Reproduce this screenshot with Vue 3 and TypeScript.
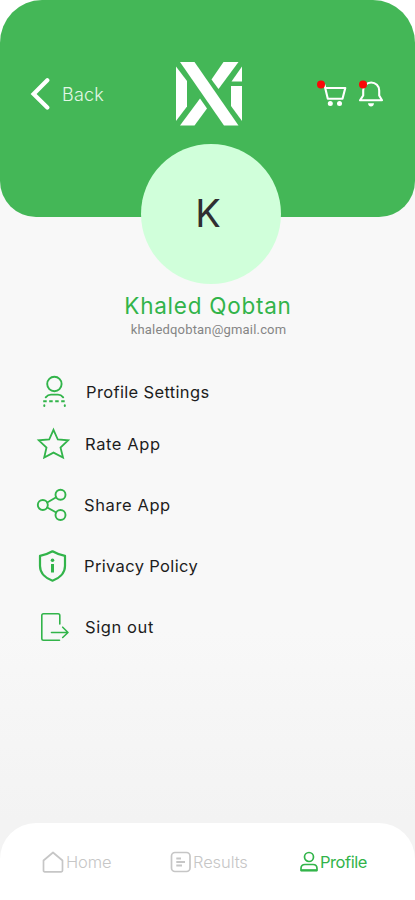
<script setup lang="ts">
interface MenuItem {
  id: string
  label: string
}

const menu: MenuItem[] = [
  { id: 'settings', label: 'Profile Settings' },
  { id: 'rate', label: 'Rate App' },
  { id: 'share', label: 'Share App' },
  { id: 'privacy', label: 'Privacy Policy' },
  { id: 'signout', label: 'Sign out' },
]
</script>

<template>
  <div class="screen">
    <header class="header">
      <button class="back" type="button">
        <svg class="chevron" viewBox="0 0 20 34" fill="none" stroke="#fff" stroke-width="4.2" stroke-linecap="round" stroke-linejoin="miter">
          <path d="M17.300 3.2 3.6 17 17.300 30.500" />
        </svg>
        <span class="back-label">Back</span>
      </button>
      <svg class="logo" viewBox="0 0 66 64" fill="#fff">
        <path d="M4 0H18.500L62.500 63.500H48Z" />
        <path d="M47.500 0H62.500L42.500 27 35.500 17.500Z" />
        <path d="M24 36.500 31 46.500 18.500 63.500H4Z" />
        <path d="M0 4.500 11 19V44.500L0 59Z" />
        <path d="M66 4.500V19.500H55.500Z" />
        <path d="M55 24H66V59L55 44Z" />
      </svg>
      <div class="actions">
        <svg class="cart" viewBox="0 0 30 28" fill="none">
          <path d="M4 5H7.500L10.800 18.800H25.500L28.300 8H8.300" stroke="#fff" stroke-width="2.100" stroke-linejoin="round" />
          <circle cx="13.300" cy="23.500" r="2.500" fill="#fff" />
          <circle cx="22.500" cy="23.500" r="2.500" fill="#fff" />
          <circle cx="4" cy="4.500" r="4" fill="#f90808" />
        </svg>
        <svg class="bell" viewBox="0 0 26 28" fill="none">
          <path d="M2 20.300H24L21.200 15.500V10.500A8 8 0 0 0 5.200 10.500V15.500Z" stroke="#fff" stroke-width="2.100" stroke-linejoin="round" />
          <path d="M10 23.200H16Q15.500 26.500 13 26.500T10 23.200Z" fill="#fff" />
          <circle cx="5" cy="4.500" r="4" fill="#f90808" />
        </svg>
      </div>
    </header>

    <main class="content">
      <div class="avatar"><span>K</span></div>
      <h1 class="name">Khaled Qobtan</h1>
      <p class="email">khaledqobtan@gmail.com</p>

      <ul class="menu">
        <li v-for="item in menu" :key="item.id" class="item" :class="item.id">
          <svg class="icon" viewBox="0 0 34 34" fill="none" stroke="#32b44a" stroke-width="1.900" stroke-linecap="round" stroke-linejoin="round">
            <template v-if="item.id === 'settings'">
              <circle cx="18.400" cy="9" r="7.200" />
              <path d="M9.700 22.300Q12 19.600 15 19.600H22Q25 19.600 27.200 22.300" />
              <path d="M7.200 26.300H30.500" stroke-dasharray="3.500 2.500" stroke-linecap="butt" />
              <path d="M8.300 30.300V31M28.800 30.300V31" stroke-width="2" />
            </template>
            <template v-else-if="item.id === 'rate'">
              <path d="M17.500 2.800 21.800 12.500 32 13.300 24.500 20.500 27 30.500 17.500 25.600 8.200 30.500 10.500 20.500 2.800 13.300 13.200 12.500Z" stroke-width="1.800" stroke-linejoin="miter" />
            </template>
            <template v-else-if="item.id === 'share'">
              <circle cx="6.800" cy="17" r="5" />
              <circle cx="24.500" cy="6.700" r="5" />
              <circle cx="24.500" cy="27" r="5" />
              <path d="M11.200 14.500 20.200 9.300M11.200 19.500 20.200 24.500" />
            </template>
            <template v-else-if="item.id === 'privacy'">
              <path d="M16.500 2.300Q22 5.600 29 6.800V17C29 24.500 23 29.500 16.500 31.700C10 29.500 4 24.500 4 17V6.800Q11 5.600 16.500 2.300Z" stroke-width="2.200" />
              <path d="M16.500 15V23.500" stroke-width="3" stroke-linecap="butt" />
              <circle cx="16.500" cy="11.300" r="1.800" fill="#32b44a" stroke="none" />
            </template>
            <template v-else>
              <path d="M23.800 14V5.500Q23.800 3.800 22.100 3.800H7.500Q5.800 3.800 5.800 5.500V28.500Q5.800 30.200 7.500 30.200H23.500" stroke-width="1.600" />
              <path d="M15.500 22.500H32M26.700 17.200 32 22.500 26.700 27.500" stroke-width="1.600" />
            </template>
          </svg>
          <span class="label">{{ item.label }}</span>
        </li>
      </ul>
    </main>

    <nav class="tabs">
      <a class="tab home">
        <svg viewBox="0 0 22 22" fill="none" stroke="#c6c6c6" stroke-width="1.700" stroke-linejoin="round">
          <path d="M1.500 9.500 11 1.500 20.500 9.500V19.500Q20.500 20.800 19.200 20.800H2.800Q1.500 20.800 1.500 19.500Z" />
        </svg>
        <span>Home</span>
      </a>
      <a class="tab results">
        <svg viewBox="0 0 22 22" fill="none" stroke="#c6c6c6" stroke-width="1.700">
          <rect x="1.500" y="1.500" width="18.500" height="19" rx="3.500" />
          <path d="M6.300 7.500H11M6.300 11H15M6.300 14.500H12" stroke-width="2" />
        </svg>
        <span>Results</span>
      </a>
      <a class="tab profile">
        <svg viewBox="0 0 20 22" fill="none" stroke="#32b44a" stroke-width="1.700" stroke-linejoin="round">
          <circle cx="10" cy="6" r="4.500" />
          <path d="M2 19.500V17.500Q2 13.500 6 13.500H14Q18 13.500 18 17.500V19.500Z" />
          <path d="M2 19.300H18" stroke-width="2.200" />
        </svg>
        <span>Profile</span>
      </a>
    </nav>
  </div>
</template>

<style>
body {
  margin: 0;
  background: #fff;
}
</style>

<style scoped>
.screen {
  display: flex;
  flex-direction: column;
  width: 415px;
  height: 900px;
  overflow: hidden;
  box-sizing: border-box;
  border-radius: 42px 42px 0 0 / 43px 43px 0 0;
  background: linear-gradient(#f8f8f8 0 630px, #f3f3f3 820px);
  font-family: Inter, "Liberation Sans", sans-serif;
}
.header {
  display: flex;
  flex: none;
  justify-content: space-between;
  align-items: flex-start;
  box-sizing: border-box;
  height: 216.500px;
  padding: 62px 31px 0 30px;
  border-radius: 0 0 36px 36px;
  background: #44b757;
}
.back {
  display: flex;
  align-items: center;
  gap: 12px;
  width: 146px;
  height: 34px;
  margin-top: 15px;
  padding: 0;
  border: 0;
  background: none;
  color: #e3f7e6;
  font: 300 18px Inter, sans-serif;
}
.chevron {
  width: 20px;
  height: 34px;
}
.back-label {
  letter-spacing: 0.2px;
}
.logo {
  width: 66px;
  height: 64px;
}
.actions {
  display: flex;
  justify-content: flex-end;
  gap: 11px;
  width: 142px;
  padding-top: 18px;
}
.cart {
  width: 30px;
  height: 28px;
}
.bell {
  width: 26px;
  height: 28px;
}
.content {
  display: flex;
  flex: 1;
  flex-direction: column;
  align-items: center;
}
.avatar {
  display: flex;
  align-items: center;
  justify-content: center;
  width: 140px;
  height: 140px;
  margin: -72.500px 0 0 6px;
  border-radius: 50%;
  background: #d0ffda;
  color: #302f32;
  font-size: 38px;
  font-weight: 400;
}
.avatar span {
  margin: -3px 5px 0 0;
}
.name {
  margin: 8px 0 0 1px;
  color: #32b44a;
  font-size: 22.500px;
  font-weight: 400;
  line-height: 28px;
  letter-spacing: 0.75px;
}
.email {
  margin: 2px 0 0 2px;
  color: #858585;
  font: 400 13px/16px Roboto, sans-serif;
  letter-spacing: 0.180px;
}
.menu {
  display: flex;
  flex-direction: column;
  align-self: stretch;
  margin: 35px 0 0;
  padding: 0 0 0 36px;
  list-style: none;
}
.item {
  display: flex;
  align-items: center;
  gap: 14px;
  box-sizing: border-box;
  height: 61px;
  color: #1d1d1d;
  font-size: 16.500px;
}
.item.settings {
  height: 37px;
  gap: 16px;
}
.item.rate {
  height: 64px;
  padding-top: 3px;
  gap: 15px;
}
.item.rate .label,
.item.share .label,
.item.signout .label {
  letter-spacing: 0.600px;
}
.item.signout {
  gap: 15px;
}
.icon {
  width: 34px;
  height: 34px;
}
.label {
  letter-spacing: 0.350px;
}
.tabs {
  display: flex;
  flex: none;
  box-sizing: border-box;
  height: 77px;
  padding: 27px 0 0 42px;
  border-radius: 36px 36px 0 0;
  background: #fff;
  color: #c6c6c6;
  font-size: 16.500px;
  font-weight: 300;
}
.tab {
  display: flex;
  align-items: center;
  gap: 1px;
  width: 128px;
  height: 23px;
}
.tab span {
  letter-spacing: -0.1px;
}
.tab svg {
  width: 22px;
  height: 22px;
}
.tab.home svg {
  margin-right: 1px;
}
.tab.profile {
  width: auto;
  margin-left: 1px;
  color: #32b44a;
  font-weight: 400;
}
.tab.profile svg {
  width: 20px;
}
.tab.profile span {
  letter-spacing: -0.450px;
}
</style>
